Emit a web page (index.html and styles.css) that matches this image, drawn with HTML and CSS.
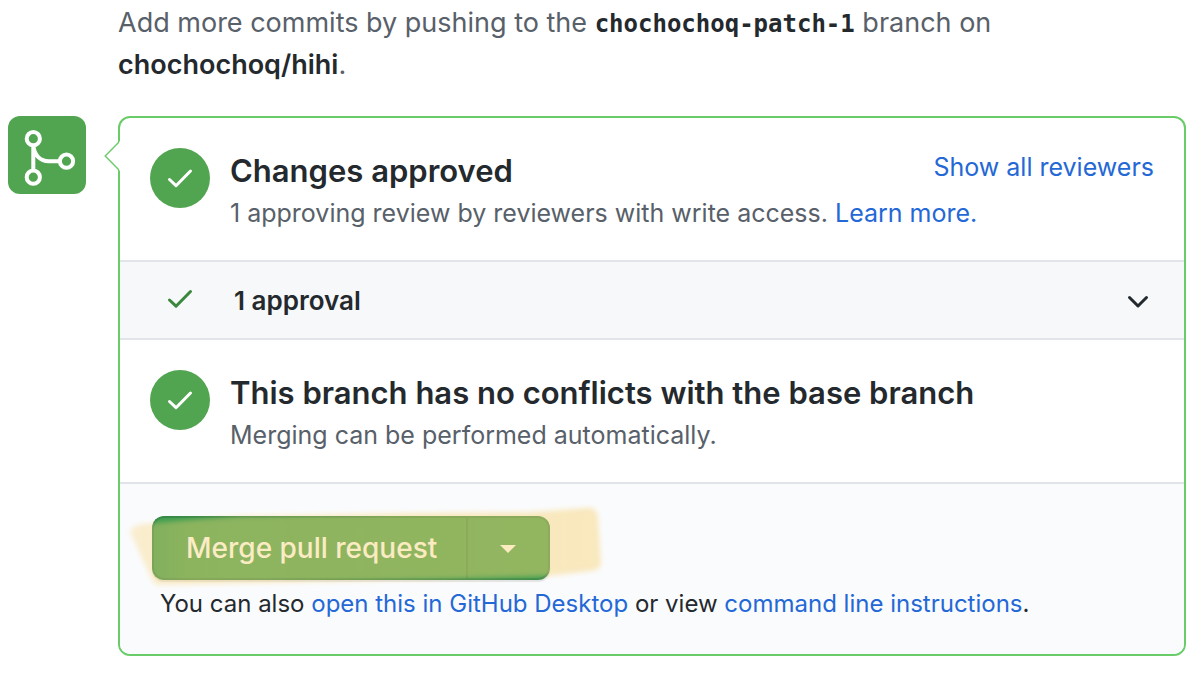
FILE: index.html
```
<!DOCTYPE html>
<html lang="en">
<head>
<meta charset="utf-8">
<title>Merge pull request</title>
<link rel="stylesheet" href="styles.css">
</head>
<body>
<main class="page">
  <p class="push-hint">Add more commits by pushing to the <strong class="branch-name">chochochoq-patch-1</strong> branch on <strong class="repo-name">chochochoq/hihi</strong>.</p>
  <div class="merge">
    <div class="merge-avatar">
      <svg width="78" height="78" viewBox="0 0 78 78" fill="none" stroke="#fff" stroke-width="4" aria-hidden="true">
        <circle cx="25.3" cy="22.7" r="6.6"/>
        <circle cx="25.3" cy="61.2" r="6.6"/>
        <circle cx="58.5" cy="45.2" r="6.6"/>
        <path d="M25.3 29V55M25.3 29C26 39 32 45.2 41 45.2H52"/>
      </svg>
    </div>
    <section class="merge-box">
      <svg class="merge-arrow" width="16" height="32" viewBox="0 0 16 32" aria-hidden="true">
        <path d="M16 1L1.200 16L16 31Z" fill="#fff"/>
        <path d="M15 2L1.200 16L15 30" fill="none" stroke="#6acb69" stroke-width="1.400"/>
      </svg>
      <div class="status">
        <span class="status-icon"><svg width="60" height="60" viewBox="0 0 60 60" aria-hidden="true"><path class="tick" d="M19.500 31.500L26 37.700L40.500 23"/></svg></span>
        <div class="status-text">
          <h2 class="status-title">Changes approved</h2>
          <p class="status-note">1 approving review by reviewers with write access. <a class="link" href="#learn">Learn more.</a></p>
        </div>
        <a class="link reviewers" href="#reviewers">Show all reviewers</a>
      </div>
      <button class="approval" type="button">
        <svg class="approval-tick" width="60" height="60" viewBox="0 0 60 60" aria-hidden="true"><path class="tick" d="M19.500 29L26 35.200L40.500 20.500"/></svg>
        <span class="approval-label">1 approval</span>
        <svg width="24" height="24" viewBox="0 0 24 24" aria-hidden="true"><path class="chevron" d="M3.500 8.500L12 17L20.500 8.500"/></svg>
      </button>
      <div class="status">
        <span class="status-icon"><svg width="60" height="60" viewBox="0 0 60 60" aria-hidden="true"><path class="tick" d="M19.500 31.500L26 37.700L40.500 23"/></svg></span>
        <div class="status-text">
          <h2 class="status-title">This branch has no conflicts with the base branch</h2>
          <p class="status-note">Merging can be performed automatically.</p>
        </div>
      </div>
      <div class="actions">
        <div class="button-group">
          <button class="merge-button" type="button">Merge pull request</button>
          <button class="menu-button" type="button" aria-label="Select merge method"><svg width="16" height="8" viewBox="0 0 16 8" aria-hidden="true"><path d="M0 0H16L8 8Z" fill="#fff"/></svg></button>
          <svg class="highlighter" width="490" height="100" viewBox="0 0 490 100" aria-hidden="true">
            <defs>
              <linearGradient id="ink" x1="0" x2="1" y1="0" y2="0">
                <stop offset="0" stop-color="#f8d273" stop-opacity=".32"/>
                <stop offset=".12" stop-color="#f8d273" stop-opacity=".42"/>
                <stop offset="1" stop-color="#f8d273" stop-opacity=".46"/>
              </linearGradient>
              <filter id="soft" x="-5%" y="-20%" width="110%" height="140%"><feGaussianBlur stdDeviation="2.5"/></filter>
            </defs>
            <path d="M10 34Q11 28 22 26L70 22L120 18L300 15L410 14L466 10Q477 8 478 19L481 65Q481 72 470 73L430 78L330 81L180 84L38 87Q34 87 31 80Z" fill="url(#ink)" filter="url(#soft)"/>
          </svg>
        </div>
        <p class="alternatives">You can also <a class="link" href="#desktop">open this in GitHub Desktop</a> or view <a class="link" href="#cli">command line instructions</a>.</p>
      </div>
    </section>
  </div>
</main>
</body>
</html>
```
FILE: styles.css
```
* { box-sizing: border-box; }
body { margin: 0; background: #fff; color: #24292e; font: 25px/42px Inter, "Liberation Sans", sans-serif; }
h2, p { margin: 0; }
button { margin: 0; border: 0; font: inherit; color: inherit; cursor: pointer; }
svg { display: block; flex: none; }
.page { padding: 2px 6px 24px 8px; }
.push-hint { max-width: 1020px; margin: 0 0 30px 110px; font-size: 27px; color: #586069; }
.branch-name { font: 700 24px/40px "DejaVu Sans Mono", monospace; color: #24292e; }
.repo-name { font-weight: 600; color: #24292e; }
.link { color: #2468d6; text-decoration: none; }
.merge { display: flex; align-items: flex-start; gap: 32px; }
.merge-avatar { flex: none; border-radius: 12px; background: #52a550; }
.merge-box { position: relative; flex: 1; min-width: 0; border: 2px solid #6acb69; border-radius: 12px; }
.merge-arrow { position: absolute; left: -16px; top: 22px; }
.status { display: flex; align-items: flex-start; gap: 20px; padding: 30px 30px 28px; }
.status-icon { flex: none; border-radius: 50%; background: #52a550; }
.tick { fill: none; stroke: #fff; stroke-width: 3; stroke-linecap: round; stroke-linejoin: round; }
.status-text { flex: 1; min-width: 0; }
.status-title { font-size: 31px; line-height: 46px; font-weight: 600; }
.status-note { line-height: 38px; color: #586069; white-space: nowrap; }
.reviewers { line-height: 38px; }
.status-text + .reviewers { margin-left: -200px; }
.approval { display: flex; align-items: center; width: 100%; height: 80px; padding: 2px 34px 0 30px; border: solid #e1e4e8; border-width: 2px 0; background: #f6f8fa; text-align: left; }
.approval-tick .tick { stroke: #3a883d; }
.approval-label { flex: 1; padding-left: 24px; font-size: 26px; font-weight: 600; }
.chevron { fill: none; stroke: #24292e; stroke-width: 3; stroke-linecap: round; stroke-linejoin: round; }
.actions { padding: 32px 32px 30px; border-top: 2px solid #e1e4e8; border-radius: 0 0 10px 10px; background: #fafbfd; }
.button-group { position: relative; display: flex; width: max-content; border-radius: 12px; box-shadow: 0 2px 1px rgba(27, 31, 35, .1); }
.merge-button, .menu-button { height: 64px; border: 2px solid #358a48; background: #3e9d50; color: #fff; font-size: 28px; font-weight: 500; }
.merge-button { padding: 0 29px 0 32px; border-right-width: 0; border-radius: 12px 0 0 12px; }
.menu-button { display: flex; align-items: center; padding: 2px 32px 0; border-radius: 0 12px 12px 0; }
.highlighter { position: absolute; left: -32px; top: -18px; pointer-events: none; }
.alternatives { padding: 4px 0 0 8px; font-size: 24px; line-height: 40px; }
```
